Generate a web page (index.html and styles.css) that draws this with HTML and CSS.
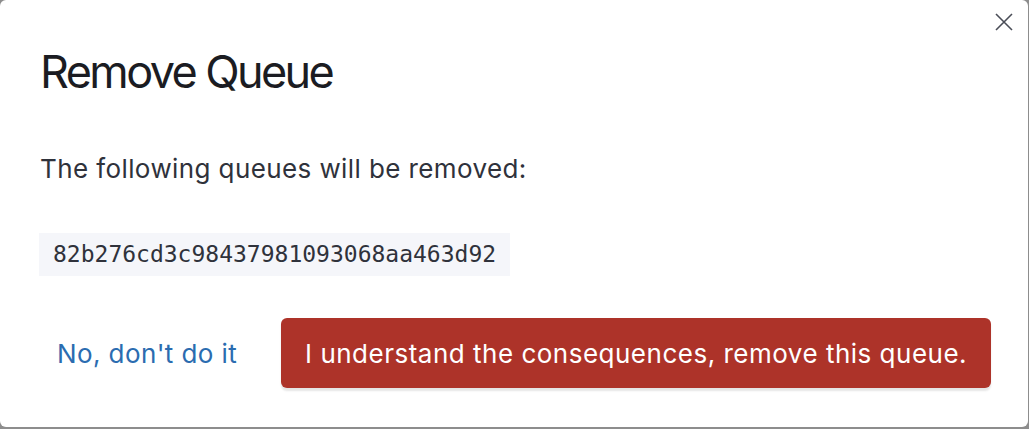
FILE: index.html
```html
<!DOCTYPE html>
<html lang="en">
<head>
<meta charset="UTF-8">
<title>Remove Queue</title>
<link rel="stylesheet" href="styles.css">
</head>
<body>

<div class="modal">
  <button class="close" aria-label="Close">
    <svg width="18" height="18" viewBox="0 0 18 18"><path d="M1 1 L17 17 M17 1 L1 17" stroke="#4a4d57" stroke-width="1.6" fill="none"/></svg>
  </button>
  <h1>Remove Queue</h1>
  <p>The following queues will be removed:</p>
  <div class="queue-list">
    <code>82b276cd3c98437981093068aa463d92</code>
  </div>
  <div class="actions">
    <a href="#" class="cancel">No, don't do it</a>
    <button class="danger">I understand the consequences, remove this queue.</button>
  </div>
</div>

</body>
</html>
```

FILE: styles.css
```css
body {
    margin: 0;
    background: #8d8d8d;
    font-family: Inter, "Noto Sans", sans-serif;
}

.modal {
    position: relative;
    box-sizing: border-box;
    width: 1028px;
    height: 427px;
    background: white;
    border-radius: 6px;
    padding: 44px 20px 0 40px;
}

.close {
    position: absolute;
    top: 13px;
    right: 15px;
    background: none;
    border: none;
    padding: 0;
    cursor: pointer;
}

h1 {
    margin: 0;
    font-size: 45px;
    font-weight: 400;
    letter-spacing: -2.6px;
    color: #1b1c22;
    line-height: 56px;
}

p {
    margin: 51px 0 0 0;
    font-size: 26px;
    letter-spacing: 0.4px;
    line-height: 36px;
    color: #2f323b;
}

.queue-list {
    margin-top: 46px;
}

code {
    display: inline-block;
    background: #f5f6fa;
    font-family: "DejaVu Sans Mono", monospace;
    font-size: 23px;
    color: #2f323b;
    padding: 0 14px;
    line-height: 43px;
    margin-left: -1px;
}

.actions {
    display: flex;
    align-items: center;
    margin-top: 42px;
    white-space: nowrap;
}

.cancel {
    color: #2b6cb0;
    text-decoration: none;
    font-size: 26px;
    letter-spacing: 0.4px;
    margin-left: 17px;
    margin-right: 44px;
}

.danger {
    flex-shrink: 0;
    background: #ad3329;
    color: white;
    border: none;
    border-radius: 6px;
    font-family: Inter, "Noto Sans", sans-serif;
    font-size: 26px;
    letter-spacing: 0.5px;
    height: 70px;
    padding: 0 24px;
    box-shadow: 0 3px 2px rgba(0,0,0,0.1);
    cursor: pointer;
}
```
